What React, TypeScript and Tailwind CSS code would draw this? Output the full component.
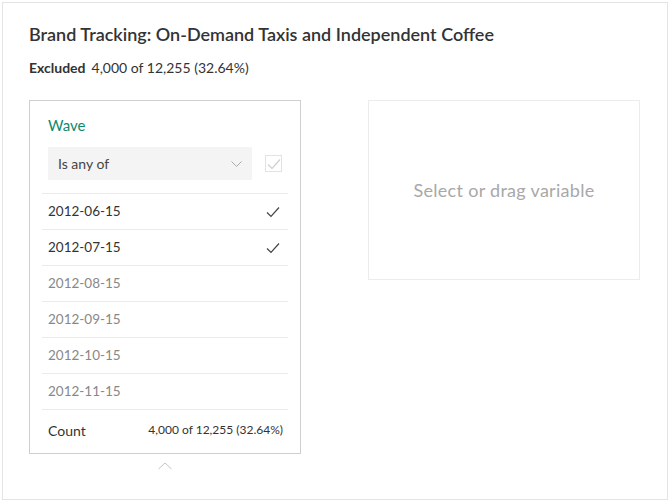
const dates = [
  { label: "2012-06-15", selected: true },
  { label: "2012-07-15", selected: true },
  { label: "2012-08-15", selected: false },
  { label: "2012-09-15", selected: false },
  { label: "2012-10-15", selected: false },
  { label: "2012-11-15", selected: false },
];

function Check({ className }: { className?: string }) {
  return (
    <svg width="14" height="12" viewBox="0 0 14 12" fill="none" className={className}>
      <path d="M1 6.5 L5 10.5 L13 1.5" stroke="currentColor" strokeWidth="1.2" />
    </svg>
  );
}

export default function App() {
  return (
    <div className="h-[502px] w-[670px] p-[2px] bg-white font-['Lato',sans-serif] text-[#333]">
      <div className="h-full border border-[#e4e4e4] pl-[26px] pt-[19px]">
        {/* HEADER */}
        <h1 className="text-[18px] leading-6 font-semibold text-[#333]">
          Brand Tracking: On-Demand Taxis and Independent Coffee
        </h1>
        <div className="mt-[12px] text-[14px] leading-5">
          <span className="font-bold">Excluded</span>
          <span className="ml-[6px]">4,000 of 12,255 (32.64%)</span>
        </div>

        <div className="mt-[22px] flex items-start gap-[67px]">
          {/* FILTER PANEL */}
          <div className="flex flex-col items-center">
            <div className="w-[272px] border border-[#cfcfcf] px-[12px]">
              <div className="pl-[6px] pt-[14px] text-[15px] leading-5 text-[#0f8a6c]">Wave</div>
              <div className="mt-[12px] flex items-center pl-[6px]">
                <div className="flex h-[33px] w-[204px] items-center justify-between bg-[#f4f4f4] pl-[10px] pr-[10px]">
                  <span className="text-[14px] text-[#444]">Is any of</span>
                  <svg width="11" height="6" viewBox="0 0 11 6" fill="none" className="text-[#aaa]">
                    <path d="M0.5 0.5 L5.5 5.5 L10.5 0.5" stroke="currentColor" strokeWidth="1" />
                  </svg>
                </div>
                <div className="ml-[13px] flex h-[17px] w-[17px] items-center justify-center border border-[#e2e2e2] text-[#d0d0d0]">
                  <Check />
                </div>
              </div>
              <div className="mt-[13px]">
                {dates.map((d) => (
                  <div
                    key={d.label}
                    className="flex h-[36px] items-center justify-between border-t border-[#ebebeb] pl-[6px] pr-[8px]"
                  >
                    <span className={`text-[13.5px] ${d.selected ? "text-[#333]" : "text-[#888]"}`}>{d.label}</span>
                    {d.selected && <Check className="text-[#444]" />}
                  </div>
                ))}
                <div className="flex h-[44px] items-center justify-between border-t border-[#ebebeb] pb-[3px] pl-[6px] pr-[5px]">
                  <span className="text-[14px] text-[#333]">Count</span>
                  <span className="text-[12px] text-[#333]">4,000 of 12,255 (32.64%)</span>
                </div>
              </div>
            </div>
            <svg width="14" height="8" viewBox="0 0 14 8" fill="none" className="mt-[8px] text-[#c4c4c4]">
              <path d="M0.5 7 L7 1 L13.5 7" stroke="currentColor" strokeWidth="1" />
            </svg>
          </div>

          {/* DROP TARGET */}
          <div className="flex h-[180px] w-[272px] items-center justify-center border border-[#ececec]">
            <span className="text-[18px] tracking-[0.3px] text-[#a8a8a8]">Select or drag variable</span>
          </div>
        </div>
      </div>
    </div>
  );
}
